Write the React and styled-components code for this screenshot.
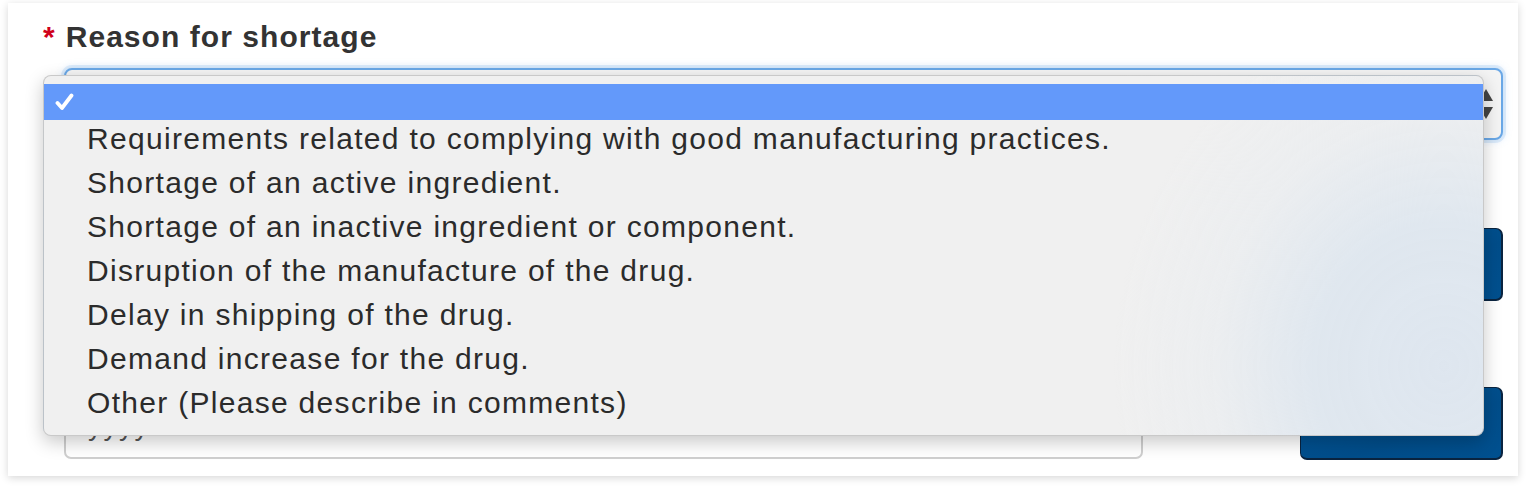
import React from "react";
import styled, { createGlobalStyle } from "styled-components";

const Global = createGlobalStyle`
  html, body { margin: 0; padding: 0; background: #ffffff; }
  body { font-family: "Liberation Sans", Arial, sans-serif; color: #333; }
  * { box-sizing: border-box; }
`;

const Page = styled.div`
  width: 1526px;
  height: 488px;
  padding: 3px 8px 0 8px;
`;

const Card = styled.div`
  position: relative;
  width: 1510px;
  height: 473px;
  background: #fff;
  box-shadow: 0 2px 8px rgba(0, 0, 0, 0.16);
  padding: 16px 15px 16px 35px;
  display: flex;
  flex-direction: column;
`;

const Label = styled.div`
  font-size: 30px;
  line-height: 36px;
  font-weight: 700;
  letter-spacing: 1.05px;
  color: #333;
  display: flex;
  gap: 11px;
`;

const Req = styled.span`
  color: #d0021b;
  letter-spacing: 0;
`;

const FieldRow = styled.div`
  margin-left: 21px;
  margin-top: ${(p) => p.$mt}px;
  height: 72px;
  display: flex;
  justify-content: ${(p) => (p.$split ? "space-between" : "flex-end")};
`;

const SelectBox = styled.div`
  flex: 1;
  height: 72px;
  border: 2px solid #69a7e6;
  border-radius: 8px;
  background: #f4f4f4;
  box-shadow: 0 0 0 3px rgba(110, 170, 235, 0.18), 0 0 8px rgba(110, 170, 235, 0.35);
  display: flex;
  align-items: center;
  justify-content: flex-end;
  padding-right: 7px;
`;

const Spinner = styled.svg`
  width: 16px;
  height: 32px;
`;

const Input = styled.div`
  width: 1079px;
  height: 72px;
  border: 2px solid #cfcfcf;
  border-radius: 7px;
  background: #fff;
  font-size: 28px;
  color: #555;
  padding: 21px 0 0 22px;
  letter-spacing: 1.5px;
`;

const Button = styled.div`
  width: 203px;
  height: ${(p) => p.$h}px;
  border-radius: 7px;
  background: linear-gradient(160deg, #00569a 0%, #004d8a 60%, #00508f 100%);
  border: 1px solid #0a2440;
  border-right-width: 2px;
  border-bottom-width: 2px;
`;

const Menu = styled.div`
  position: absolute;
  left: 35px;
  top: 72px;
  width: 1441px;
  height: 361px;
  border-radius: 8px;
  border: 1px solid rgba(0, 0, 0, 0.16);
  background:
    radial-gradient(ellipse 330px 360px at 1400px 290px, rgba(222, 230, 239, 1) 0%, rgba(223, 231, 239, 0.95) 40%, rgba(232, 236, 240, 0.5) 70%, rgba(240, 240, 240, 0) 100%),
    #f0f0f0;
  box-shadow: 0 6px 18px rgba(0, 0, 0, 0.22);
  padding-top: 8px;
  overflow: hidden;
`;

const Selected = styled.div`
  height: 36px;
  background: #6399fa;
  display: flex;
  align-items: center;
  padding-left: 11px;
`;

const Item = styled.div`
  height: 44px;
  line-height: 32px;
  padding-top: 3px;
  padding-left: 43px;
  font-size: 30px;
  letter-spacing: 1.3px;
  color: #2b2b2b;
  white-space: nowrap;
`;

const options = [
  "Requirements related to complying with good manufacturing practices.",
  "Shortage of an active ingredient.",
  "Shortage of an inactive ingredient or component.",
  "Disruption of the manufacture of the drug.",
  "Delay in shipping of the drug.",
  "Demand increase for the drug.",
  "Other (Please describe in comments)",
];

export default function App() {
  return (
    <Page>
      <Global />
      <Card>
        <Label>
          <Req>*</Req>
          <span>Reason for shortage</span>
        </Label>
        <FieldRow $mt={13}>
          <SelectBox>
            <Spinner viewBox="0 0 16 32">
              <path d="M8 1 L15 13 L1 13 Z" fill="#444" />
              <path d="M1 19 L15 19 L8 31 Z" fill="#444" />
            </Spinner>
          </SelectBox>
        </FieldRow>
        <FieldRow $mt={88}>
          <Button $h={73} />
        </FieldRow>
        <FieldRow $mt={87} $split>
          <Input>yyyy-mm-dd</Input>
          <Button $h={73} />
        </FieldRow>
        <Menu>
          <Selected>
            <svg width="20" height="18" viewBox="0 0 20 18">
              <path d="M2.5 10 L7 15 L16.5 2.5" fill="none" stroke="#fff" strokeWidth="3.8" strokeLinecap="round" strokeLinejoin="round" />
            </svg>
          </Selected>
          {options.map((o) => (
            <Item key={o}>{o}</Item>
          ))}
        </Menu>
      </Card>
    </Page>
  );
}
